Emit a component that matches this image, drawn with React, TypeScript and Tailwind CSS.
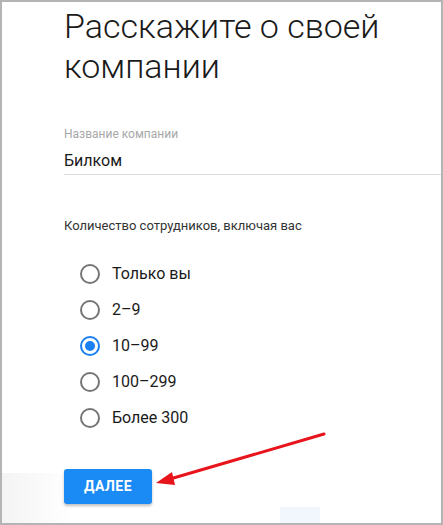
import React from "react";

const options = ["Только вы", "2–9", "10–99", "100–299", "Более 300"];

function Radio({ checked }: { checked: boolean }) {
  return (
    <span
      className={
        "flex h-[20px] w-[20px] items-center justify-center rounded-full border-2 " +
        (checked ? "border-[#1a7ff0]" : "border-[#767676]")
      }
    >
      {checked && <span className="h-[10px] w-[10px] rounded-full bg-[#1a7ff0]" />}
    </span>
  );
}

export default function App() {
  return (
    <div
      className="relative h-[525px] w-[443px] overflow-hidden border-2 border-[#b4b4b4] bg-white"
      style={{ fontFamily: "Roboto, 'Noto Sans', sans-serif" }}
    >
      {/* faint background at bottom */}
      <div className="pointer-events-none absolute bottom-0 left-0 h-[50px] w-[70px] bg-gradient-to-r from-[#efefef] to-transparent opacity-70" />
      <div className="pointer-events-none absolute bottom-0 left-[278px] h-[16px] w-[40px] bg-[#edf3fc] opacity-70" />

      <div className="relative flex flex-col pl-[62px] pt-[4px]">
        <h1 className="text-[34px] font-light leading-[40px] text-[#1a1a1a]">
          Расскажите о своей
          <br />
          компании
        </h1>

        <div className="mt-[41px] flex flex-col border-b border-[#dcdcdc]">
          <span className="text-[12px] leading-[14px] text-[#a8a8a8]">Название компании</span>
          <span className="mt-[10px] pb-[3px] text-[16px] leading-[20px] text-[#1a1a1a]">Билком</span>
        </div>

        <div className="mt-[43px] text-[13px] leading-[16px] text-[#333]">
          Количество сотрудников, включая вас
        </div>

        <div className="mt-[30px] flex flex-col gap-[16px] pl-[16px]">
          {options.map((o, i) => (
            <div key={o} className="flex h-[20px] items-center gap-[12px]">
              <Radio checked={i === 2} />
              <span className="text-[16px] leading-[20px] text-[#1a1a1a]">{o}</span>
            </div>
          ))}
        </div>

        <div className="mt-[41px]">
          <button className="h-[35px] w-[88px] rounded-[3px] bg-[#1a8af5] text-[14px] font-bold tracking-[0.5px] text-white shadow-[0_2px_3px_rgba(0,0,0,0.25)]">
            ДАЛЕЕ
          </button>
        </div>
      </div>

      <svg className="pointer-events-none absolute left-0 top-0" width="443" height="525">
        <line x1="322" y1="432" x2="168" y2="477" stroke="#e8141b" strokeWidth="3" strokeLinecap="round" />
        <polygon points="154,481 170,470 173,483" fill="#e8141b" />
      </svg>
    </div>
  );
}
